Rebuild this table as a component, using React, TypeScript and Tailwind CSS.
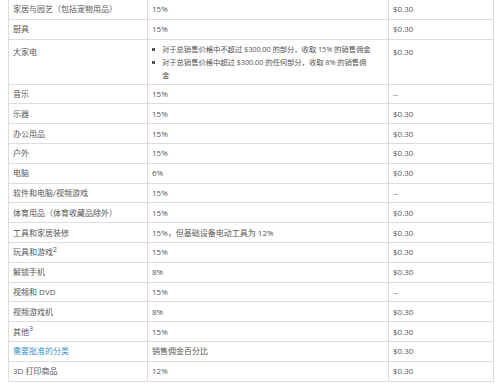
const rows: { name: React.ReactNode; rate: React.ReactNode; min: string }[] = [
  { name: "家居与园艺（包括宠物用品）", rate: "15%", min: "$0.30" },
  { name: "厨具", rate: "15%", min: "$0.30" },
  { name: "大家电", rate: "bullets", min: "$0.30" },
  { name: "音乐", rate: "15%", min: "--" },
  { name: "乐器", rate: "15%", min: "$0.30" },
  { name: "办公用品", rate: "15%", min: "$0.30" },
  { name: "户外", rate: "15%", min: "$0.30" },
  { name: "电脑", rate: "6%", min: "$0.30" },
  { name: "软件和电脑/视频游戏", rate: "15%", min: "--" },
  { name: "体育用品（体育收藏品除外）", rate: "15%", min: "$0.30" },
  { name: "工具和家居装修", rate: "15%，但基础设备电动工具为 12%", min: "$0.30" },
  { name: <>玩具和游戏<sup className="text-[7px]">2</sup></>, rate: "15%", min: "$0.30" },
  { name: "解锁手机", rate: "8%", min: "$0.30" },
  { name: "视频和 DVD", rate: "15%", min: "--" },
  { name: "视频游戏机", rate: "8%", min: "$0.30" },
  { name: <>其他<sup className="text-[7px]">3</sup></>, rate: "15%", min: "$0.30" },
  { name: <span className="text-[#3d8fc6]">需要批准的分类</span>, rate: "销售佣金百分比", min: "$0.30" },
  { name: "3D 打印商品", rate: "12%", min: "$0.30" },
];

const Bullets = () => (
  <div className="flex flex-col leading-[13px] pt-[3px] text-[7.4px] tracking-[-0.1px]">
    <div className="flex whitespace-nowrap">
      <span className="w-[3px] h-[3px] bg-[#555] mt-[5px] ml-[0px] mr-[7px] shrink-0" />
      <span>对于总销售价格中不超过 $300.00 的部分，收取 15% 的销售佣金</span>
    </div>
    <div className="flex whitespace-nowrap">
      <span className="w-[3px] h-[3px] bg-[#555] mt-[5px] ml-[0px] mr-[7px] shrink-0" />
      <span>
        对于总销售价格中超过 $300.00 的任何部分，收取 8% 的销售佣
        <br />金
      </span>
    </div>
  </div>
);

export default function App() {
  return (
    <div className="w-[500px] h-[384px] overflow-hidden bg-white">
      <div
        className="ml-[8px] w-[486px] border-l border-r border-[#dcdcdc] text-[8px] text-[#555]"
        style={{ fontFamily: '"Open Sans", "Noto Sans CJK SC", sans-serif' }}
      >
        {rows.map((r, i) => {
          const big = r.rate === "bullets";
          return (
            <div
              key={i}
              className={
                "grid grid-cols-[139px_241px_1fr] border-b border-[#dcdcdc] " +
                (big ? "h-[45px]" : "h-[19.8px]")
              }
            >
              <div className={"pl-[4px] border-r border-[#dcdcdc] " + (big ? "pt-[5px] leading-[13px]" : "flex items-center")}>
                <span>{r.name}</span>
              </div>
              <div className={"pl-[4px] border-r border-[#dcdcdc] " + (big ? "" : "flex items-center")}>
                {big ? <Bullets /> : <span>{r.rate}</span>}
              </div>
              <div className={"pl-[4px] " + (big ? "pt-[5px] leading-[13px]" : "flex items-center")}>
                <span>{r.min}</span>
              </div>
            </div>
          );
        })}
      </div>
    </div>
  );
}
